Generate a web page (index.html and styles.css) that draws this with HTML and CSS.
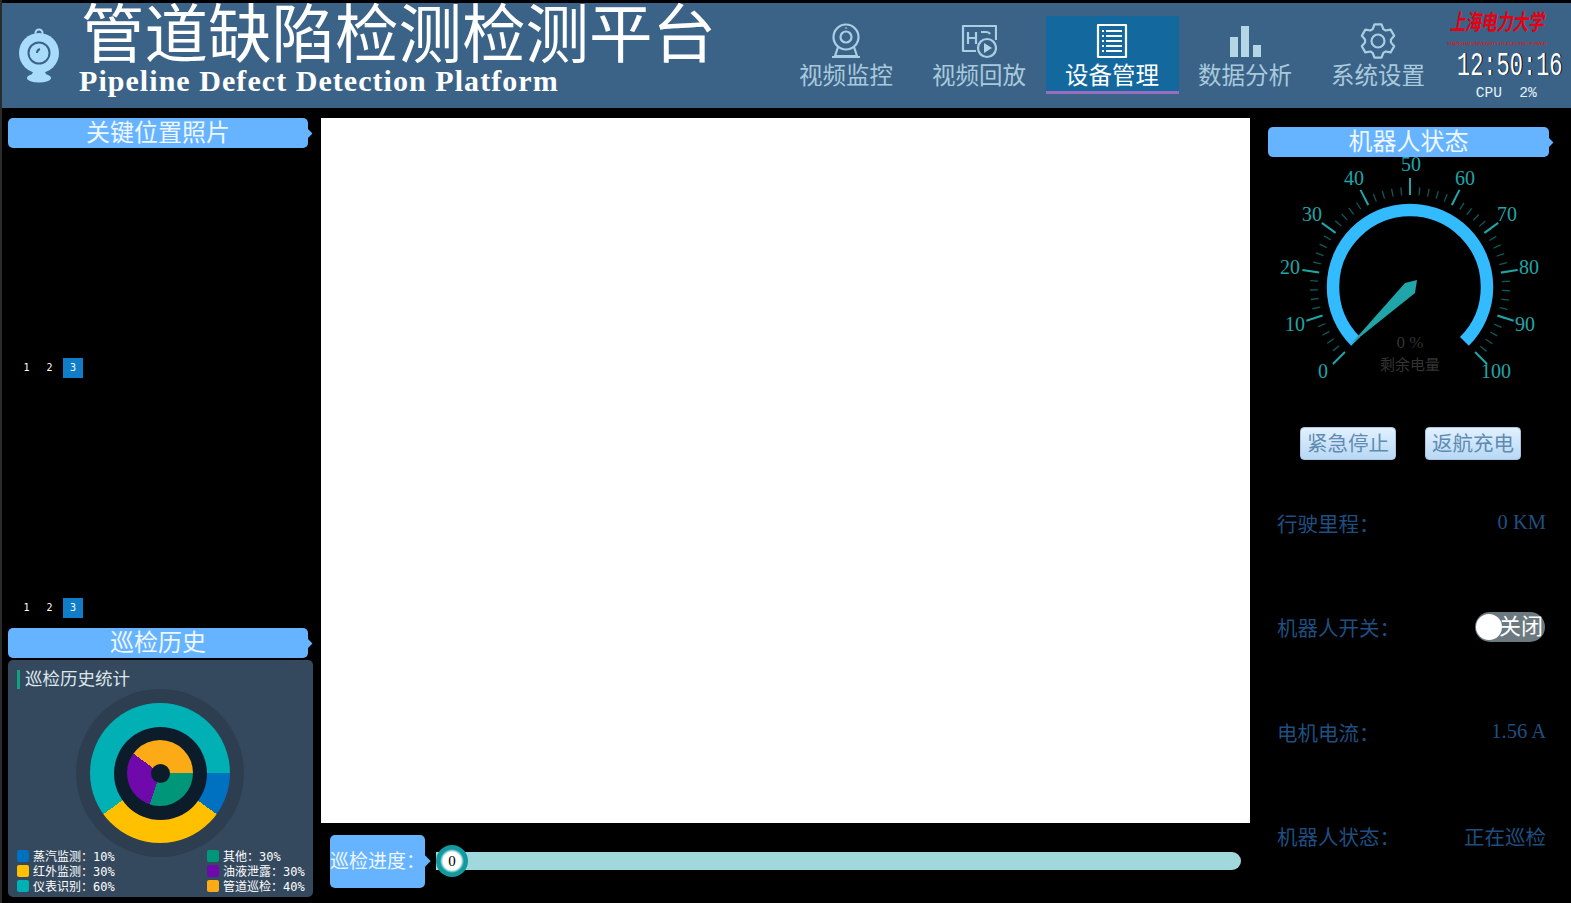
FILE: index.html
```html
<!DOCTYPE html>
<html lang="zh-CN">
<head>
<meta charset="utf-8">
<title>管道缺陷检测检测平台</title>
<link rel="stylesheet" href="styles.css">
</head>
<body>
<div class="app">
  <header class="header">
    <svg class="logo" viewBox="0 0 42 56" aria-hidden="true">
      <circle class="logo-loop" cx="20" cy="5" r="3.5"/>
      <path class="logo-fill" d="M15 42h10l3 6H12z"/>
      <ellipse class="logo-fill" cx="20" cy="50" rx="12" ry="4.5"/>
      <circle class="logo-fill" cx="20" cy="25" r="20"/>
      <circle class="logo-lens" cx="20" cy="25" r="10.5"/>
      <path class="logo-lens" d="M18 25q0-3 3-4"/>
    </svg>
    <div class="brand">
      <h1 class="brand-cn">管道缺陷检测检测平台</h1>
      <p class="brand-en">Pipeline Defect Detection Platform</p>
    </div>
    <nav class="nav">
      <a class="nav-item">
        <svg class="nav-icon" viewBox="0 0 36 36"><circle cx="18" cy="14" r="12.5"/><circle cx="18" cy="14" r="5.5"/><path d="M10 24l-3 9h22l-3-9M4 34h28M18 4.5v1"/></svg>
        <span>视频监控</span>
      </a>
      <a class="nav-item">
        <svg class="nav-icon" viewBox="0 0 36 36"><path d="M15 28H2V3h33v14M7 9v12M15 9v12M7 15h8M20 9h5q3 0 4 2"/><circle cx="26" cy="25" r="9"/><path class="solid" d="M23 20l8 5-8 5z"/></svg>
        <span>视频回放</span>
      </a>
      <a class="nav-item nav-item-active">
        <svg class="nav-icon" viewBox="0 0 36 36"><path d="M4 2h28v32H4z"/><path d="M8 8h2M12 8h16M8 13h2M12 13h16M8 18h2M12 18h16M8 23h2M12 23h16M8 28h2M12 28h16"/></svg>
        <span>设备管理</span>
      </a>
      <a class="nav-item">
        <svg class="nav-icon" viewBox="0 0 36 36"><path class="solid" d="M3 14h8v20H3zM14 3h8v31h-8zM26 22h8v12h-8z"/></svg>
        <span>数据分析</span>
      </a>
      <a class="nav-item">
        <svg class="nav-icon" viewBox="0 0 36 36"><path d="M12.71 6.12L14.47 1.37H21.53L23.29 6.12L25.64 7.48L30.63 6.63L34.17 12.75L30.93 16.64V19.36L34.17 23.25L30.63 29.37L25.64 28.52L23.29 29.88L21.53 34.63H14.47L12.71 29.88L10.36 28.52L5.37 29.37L1.83 23.25L5.07 19.36V16.64L1.83 12.75L5.37 6.63L10.36 7.48Z"/><circle cx="18" cy="18" r="6.5"/></svg>
        <span>系统设置</span>
      </a>
    </nav>
    <div class="status">
      <div class="school">上海电力大学</div>
      <div class="school-en">SHANGHAI UNIVERSITY OF ELECTRIC POWER</div>
      <div class="clock">12:50:16</div>
      <div class="cpu">CPU&nbsp;&nbsp;2%</div>
    </div>
  </header>

  <main class="main">
    <aside class="left">
      <h2 class="section-title">关键位置照片</h2>
      <section class="carousel">
        <div class="pager"><span class="page">1</span><span class="page">2</span><span class="page page-active">3</span></div>
      </section>
      <section class="carousel">
        <div class="pager"><span class="page">1</span><span class="page">2</span><span class="page page-active">3</span></div>
      </section>
      <h2 class="section-title">巡检历史</h2>
      <section class="card">
        <h3 class="card-title">巡检历史统计</h3>
        <div class="donut-wrap">
          <div class="donut-halo">
            <div class="donut-outer">
              <div class="donut-gap">
                <div class="donut-inner">
                  <div class="donut-hole"></div>
                </div>
              </div>
            </div>
          </div>
        </div>
        <div class="legend">
          <ul class="legend-col">
            <li class="legend-item"><i class="swatch swatch-blue"></i>蒸汽监测：10%</li>
            <li class="legend-item"><i class="swatch swatch-yellow"></i>红外监测：30%</li>
            <li class="legend-item"><i class="swatch swatch-teal"></i>仪表识别：60%</li>
          </ul>
          <ul class="legend-col">
            <li class="legend-item"><i class="swatch swatch-green"></i>其他：30%</li>
            <li class="legend-item"><i class="swatch swatch-purple"></i>油液泄露：30%</li>
            <li class="legend-item"><i class="swatch swatch-orange"></i>管道巡检：40%</li>
          </ul>
        </div>
      </section>
    </aside>

    <section class="center">
      <div class="viewport"></div>
      <div class="progress">
        <div class="progress-label">巡检进度：</div>
        <div class="slider"><span class="slider-knob">0</span></div>
      </div>
    </section>

    <aside class="right">
      <h2 class="section-title">机器人状态</h2>
      <svg class="gauge" viewBox="1268 157 281 270">
        <g class="gauge-minor"><path d="M1342.1 354.9A96 96 0 1 1 1477.9 354.9"/></g>
        <g class="gauge-major" transform="translate(1410 287)">
          <path transform="rotate(-135)" d="M0-92V-109"/>
          <path transform="rotate(-108)" d="M0-92V-109"/>
          <path transform="rotate(-81)" d="M0-92V-109"/>
          <path transform="rotate(-54)" d="M0-92V-109"/>
          <path transform="rotate(-27)" d="M0-92V-109"/>
          <path d="M0-92V-109"/>
          <path transform="rotate(27)" d="M0-92V-109"/>
          <path transform="rotate(54)" d="M0-92V-109"/>
          <path transform="rotate(81)" d="M0-92V-109"/>
          <path transform="rotate(108)" d="M0-92V-109"/>
          <path transform="rotate(135)" d="M0-92V-109"/>
        </g>
        <path class="gauge-ring" d="M1355.6 341.4A77 77 0 1 1 1464.4 341.4"/>
        <path class="gauge-needle" d="M1417 280L1405 283L1350 345L1415 293Z"/>
        <g class="gauge-labels">
          <text x="1323" y="378">0</text>
          <text x="1295" y="331">10</text>
          <text x="1290" y="274">20</text>
          <text x="1312" y="221">30</text>
          <text x="1354" y="185">40</text>
          <text x="1411" y="171">50</text>
          <text x="1465" y="185">60</text>
          <text x="1507" y="221">70</text>
          <text x="1529" y="274">80</text>
          <text x="1525" y="331">90</text>
          <text x="1496" y="378">100</text>
        </g>
        <text class="gauge-value" x="1410" y="348">0 %</text>
        <text class="gauge-caption" x="1410" y="370">剩余电量</text>
      </svg>
      <div class="actions">
        <button class="action">紧急停止</button>
        <button class="action">返航充电</button>
      </div>
      <dl class="stats">
        <div class="stat"><dt>行驶里程：</dt><dd>0 KM</dd></div>
        <div class="stat"><dt>机器人开关：</dt><dd class="toggle"><span class="toggle-knob"></span>关闭</dd></div>
        <div class="stat"><dt>电机电流：</dt><dd>1.56 A</dd></div>
        <div class="stat"><dt>机器人状态：</dt><dd>正在巡检</dd></div>
      </dl>
    </aside>
  </main>
</div>
</body>
</html>
```

FILE: styles.css
```css
* { box-sizing: border-box; }
html, body { margin: 0; height: 100%; background: #000; overflow: hidden; }
body { font-family: "Liberation Serif", "Noto Sans CJK SC", serif; color: #fff; }
h1, h2, h3, p, ul, dl, dd { margin: 0; padding: 0; font-weight: 400; }
ul { list-style: none; }

.app { width: 1571px; height: 903px; padding: 3px 0 0 2px; display: flex; flex-direction: column; box-shadow: inset 2px 0 0 #2b2b2b; }

.header { height: 105px; flex: none; display: flex; background: #3b6388; }
.logo { width: 42px; height: 56px; margin: 25px 0 0 17px; flex: none; }
.logo-fill { fill: #a9dcfb; }
.logo-loop { fill: none; stroke: #a9dcfb; stroke-width: 2; }
.logo-lens { fill: none; stroke: #3b6388; stroke-width: 2; }
.brand { width: 718.5px; flex: none; padding: 3px 0 0 20px; }
.brand-cn { font-size: 63.5px; line-height: 60px; white-space: nowrap; }
.brand-en { font-size: 30px; line-height: 30px; font-weight: 700; white-space: nowrap; letter-spacing: 1.05px; margin-left: -2px; }

.nav { display: flex; width: 665px; flex: none; padding-top: 13px; }
.nav-item { width: 133px; height: 78px; display: flex; flex-direction: column; align-items: center; color: #a9c9dc; font-size: 23.5px; line-height: 30px; }
.nav-item-active { background: #13689e; border-bottom: 3px solid #9b6dbf; color: #fff; }
.nav-icon { width: 36px; height: 36px; margin: 7px 0 2px; fill: none; stroke: #a9cfe2; stroke-width: 2.2; stroke-linejoin: round; }
.nav-icon .solid { fill: #b5d6e5; stroke: none; }
.nav-item-active .nav-icon { stroke: #fff; }

.status { flex: 1; min-width: 0; display: flex; flex-direction: column; align-items: center; padding-top: 6px; overflow: hidden; }
.school { font-family: "Noto Sans CJK SC", sans-serif; font-weight: 700; font-style: italic; font-size: 15.7px; line-height: 26px; margin-right: 22px; color: #e60012; transform: scaleY(1.4); white-space: nowrap; }
.school-en { font-family: "Liberation Sans", sans-serif; font-weight: 700; font-size: 4.4px; line-height: 8px; margin: 5px 22px 0 0; color: #d0201e; white-space: nowrap; }
.clock { font-family: "Liberation Mono", monospace; font-size: 22px; line-height: 22px; margin: 8px 0 0 4px; color: #fff; transform: scaleY(1.5); text-shadow: 1px 0 0 #000; white-space: nowrap; }
.cpu { font-family: "Liberation Mono", monospace; font-size: 14.5px; line-height: 18px; color: #e4f3fb; margin: 6px 3px 0 0; white-space: nowrap; }

.main { flex: 1; display: flex; min-height: 0; }
.left { width: 305px; margin: 10px 0 0 6px; flex: none; display: flex; flex-direction: column; }
.center { width: 929px; margin: 10px 0 0 8px; flex: none; display: flex; flex-direction: column; }
.right { width: 281px; margin: 19px 0 0 18px; flex: none; display: flex; flex-direction: column; }

.section-title { position: relative; width: 300px; height: 30px; flex: none; background: #66b3ff; border-radius: 5px; font-size: 24px; line-height: 31px; text-align: center; color: #eef7ff; z-index: 1; }
.right .section-title { width: 281px; }
.section-title::after { content: ""; position: absolute; right: -3px; top: 12px; width: 7px; height: 7px; background: #66b3ff; transform: rotate(45deg); }

.carousel { height: 240px; flex: none; display: flex; align-items: flex-end; padding: 0 0 10px 7px; }
.pager { display: flex; font-family: "DejaVu Sans Mono", monospace; font-size: 10px; }
.page { width: 23px; height: 20px; line-height: 20px; text-align: center; }
.page-active { width: 20px; margin-left: 2px; background: #0f7dc8; }

.card { margin-top: 2px; height: 237px; background: #34495e; border-radius: 5px; padding: 10px 9px 0; display: flex; flex-direction: column; }
.card-title { font-size: 17.5px; line-height: 19px; border-left: 3px solid #10a37f; padding-left: 5px; color: #dfe6ec; white-space: nowrap; }
.donut-wrap { display: flex; justify-content: center; margin: 0 0 0 -1px; }
.donut-halo { width: 168px; height: 168px; border-radius: 50%; background: #2d3e50; display: flex; align-items: center; justify-content: center; }
.donut-outer { width: 140px; height: 140px; border-radius: 50%; display: flex; align-items: center; justify-content: center; background: conic-gradient(from 90deg, #0070c0 0 36deg, #ffc000 36deg 144deg, #00b0b5 144deg 360deg); }
.donut-gap { width: 93px; height: 93px; border-radius: 50%; background: #0d1c2a; display: flex; align-items: center; justify-content: center; }
.donut-inner { width: 66px; height: 66px; border-radius: 50%; display: flex; align-items: center; justify-content: center; background: conic-gradient(from 90deg, #00967a 0 108deg, #7009ac 108deg 216deg, #fcaa16 216deg 360deg); }
.donut-hole { width: 19px; height: 19px; border-radius: 50%; background: #0d1c2a; }

.legend { display: flex; justify-content: space-between; margin-top: -9px; position: relative; }
.legend-item { display: flex; align-items: center; height: 15px; font-family: "DejaVu Sans Mono", "Noto Sans CJK SC", monospace; font-size: 12px; white-space: nowrap; color: #fff; }
.legend-col:last-child { width: 97px; }
.swatch { width: 12px; height: 12px; border-radius: 2px; margin-right: 4px; flex: none; }
.swatch-blue { background: #0070c0; }
.swatch-yellow { background: #ffc000; }
.swatch-teal { background: #00b0b5; }
.swatch-green { background: #00967a; }
.swatch-purple { background: #7009ac; }
.swatch-orange { background: #fcaa16; }

.viewport { height: 705px; flex: none; background: #fff; }
.progress { display: flex; align-items: center; margin-top: 12px; padding-left: 9px; }
.progress-label { position: relative; width: 95px; height: 53px; background: #66b3ff; border-radius: 5px; font-size: 19px; line-height: 53px; color: #eef7ff; white-space: nowrap; }
.progress-label::after { content: ""; position: absolute; right: -4px; top: 22px; width: 8px; height: 8px; background: #66b3ff; transform: rotate(45deg); }
.slider { position: relative; width: 805px; height: 18px; margin: 0 0 1px 11px; background: #a0d8db; border-radius: 0 9px 9px 0; }
.slider-knob { position: absolute; left: 0; top: -7px; width: 32px; height: 32px; border-radius: 50%; background: radial-gradient(circle, #fff 0 9px, #109a9f 12px); color: #000; font: 15px/32px "Liberation Serif", serif; text-align: center; }

.gauge { display: block; width: 281px; height: 270px; flex: none; overflow: hidden; }
.gauge-minor path { fill: none; stroke: #0b5a5c; stroke-width: 8; stroke-dasharray: 1.3 7.748; stroke-dashoffset: .65; }
.gauge-major path { stroke: #20a5a8; stroke-width: 2; fill: none; }
.gauge-ring { fill: none; stroke: #33bbff; stroke-width: 12.5; }
.gauge-needle { fill: #20a5a8; }
.gauge-labels text { font-size: 20px; fill: #20a5a8; text-anchor: middle; }
.gauge-value { font-size: 17px; fill: #333; text-anchor: middle; }
.gauge-caption { font-size: 15px; fill: #333; text-anchor: middle; }

.actions { display: flex; gap: 29px; padding-left: 32px; flex: none; }
.action { width: 96px; height: 33px; padding: 1px 0 0; border: 1px solid #a9c4dc; border-radius: 4px; background: linear-gradient(#e2f1ff, #b7d8f6); font: 20.5px/31px "Liberation Serif", "Noto Sans CJK SC", serif; color: #5f8bb0; white-space: nowrap; }

.stats { margin-top: 10.5px; display: grid; grid-auto-rows: 104.5px; padding: 0 3px 0 9px; }
.stat { display: flex; align-items: center; justify-content: space-between; color: #1f4f80; font-size: 20.5px; }
.toggle { position: relative; width: 70px; height: 30px; margin-right: 1px; border-radius: 15px; background: #6c7a80; color: #fff; font-size: 22px; line-height: 30px; text-align: right; padding-right: 2px; white-space: nowrap; }
.toggle-knob { position: absolute; left: 1px; top: 2px; width: 26px; height: 26px; border-radius: 50%; background: #fff; }
```
